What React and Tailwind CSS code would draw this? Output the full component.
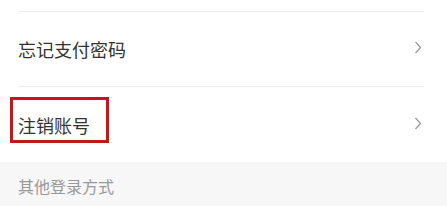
export default function App() {
  return (
    <div
      className="w-[447px] h-[206px] bg-white overflow-hidden flex flex-col"
      style={{ fontFamily: '"Noto Sans CJK SC", "Noto Sans", sans-serif' }}
    >
      <div className="pl-[18px] pr-[23px]">
        <div className="h-[12px] border-b border-[#ececec]" />

        <div className="h-[75px] flex items-center justify-between border-b border-[#ececec]">
          <span className="text-[18px] leading-[24px] text-[#333]">忘记支付密码</span>
          <Chevron />
        </div>

        <div className="relative h-[75px] flex items-center justify-between">
          <span className="text-[18px] leading-[24px] text-[#333]">注销账号</span>
          <Chevron />
          <div className="absolute left-[-8px] top-[10px] w-[99px] h-[46px] border-[3px] border-[#c4161c]" />
        </div>
      </div>

      <div className="flex-1 bg-[#f7f7f7] pl-[18px] pt-[14px]">
        <span className="block text-[16px] leading-[20px] text-[#999]">其他登录方式</span>
      </div>
    </div>
  );
}

function Chevron() {
  return (
    <svg width="8" height="13" viewBox="0 0 8 13" className="mr-[2px] mb-[3px]">
      <polyline
        points="1.5,1 6.5,6.5 1.5,12"
        fill="none"
        stroke="#9a9a9a"
        strokeWidth="1.3"
      />
    </svg>
  );
}
